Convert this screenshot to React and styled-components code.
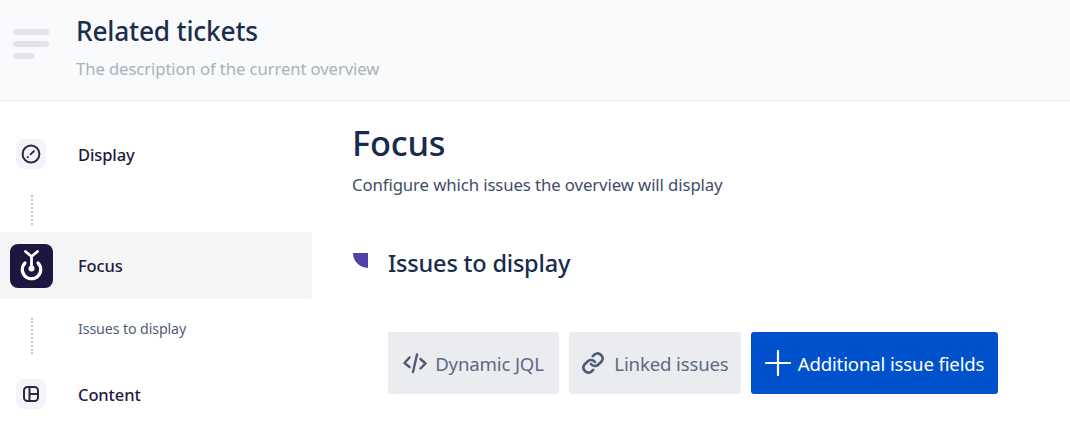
import React from "react";
import styled, { createGlobalStyle } from "styled-components";

const Global = createGlobalStyle`
  html, body { margin: 0; padding: 0; background: #fff; overflow: hidden; }
  body { font-family: "Noto Sans", "Open Sans", sans-serif; }
`;
const Page = styled.div`width: 1070px; height: 428px; overflow: hidden; display: flex; flex-direction: column;`;
const Header = styled.header`
  height: 100px; flex: none; box-sizing: content-box; background: #f9fafc; border-bottom: 1px solid #e6e8ec;
  display: flex; align-items: flex-start;
`;
const Burger = styled.div`
  width: 36px; margin: 29px 27px 0 13px; display: flex; flex-direction: column; gap: 6px;
`;
const BurgerBar = styled.span`
  display: block; height: 6px; border-radius: 3px; background: #e1e3e9; width: ${p => p.$w}px;
`;
const HeadText = styled.div`padding-top: 12px;`;
const HeadTitle = styled.h1`margin: 0; font-size: 26.3px; line-height: 38px; font-weight: 500; color: #1d2e4d; letter-spacing: -0.2px;`;
const HeadSub = styled.p`margin: 1px 0 0; font-size: 16.7px; line-height: 36px; color: #aab1c0; letter-spacing: -0.1px;`;
const Body = styled.div`display: flex; flex: 1; min-height: 0;`;
const Side = styled.nav`width: 312px; flex: none; display: flex; flex-direction: column; padding-top: 38px;`;
const StepRow = styled.div`
  height: ${p => p.$h}px; display: flex; align-items: center; color: #1e1a40;
  font-size: 16.5px; font-weight: 500; letter-spacing: -0.1px;
  margin-top: ${p => p.$t || 0}px;
  ${p => p.$active ? "background: #f4f5f7; border-radius: 0 3px 3px 0;" : ""}
`;
const IconSlot = styled.div`width: 78px; flex: none; display: flex; justify-content: center; padding-right: 16px; box-sizing: border-box;`;
const IconBox = styled.div`
  width: 30px; height: 30px; border-radius: 8px; background: #f4f5f7; display: flex; align-items: center; justify-content: center;
`;
const ActiveIcon = styled.div`
  width: 43px; height: 44px; border-radius: 8px; background: #1f1640; display: flex;
`;
const Connector = styled.div`
  height: ${p => p.$h}px; margin-top: ${p => p.$t}px; display: flex; align-items: center;
`;
const Dots = styled.span`
  display: block; width: 0; height: 100%; margin-left: 31px; border-left: 2px dotted #c3c8d2; 
`;
const SubLabel = styled.span`
  margin: 0 0 16px 45px; font-size: 14.2px; color: #4f5d78; letter-spacing: -0.1px;
`;
const Main = styled.main`flex: 1; padding: 20px 0 0 40px;`;
const Title = styled.h2`margin: 0; font-size: 34.4px; line-height: 44px; font-weight: 500; color: #172b4d; letter-spacing: -0.2px;`;
const Sub = styled.p`margin: 7px 0 0; font-size: 16.75px; line-height: 26px; color: #3f4d68; letter-spacing: -0.1px;`;
const Section = styled.div`display: flex; align-items: center; margin: 45px 0 0 1px; height: 40px; gap: 20px;`;
const Quarter = styled.span`
  width: 15px; height: 15px; background: #5243aa; border-bottom-left-radius: 15px; margin-top: -6px; flex: none;
`;
const SectionTitle = styled.h3`margin: 0; font-size: 23.5px; font-weight: 500; color: #172b4d; letter-spacing: -0.2px;`;
const Buttons = styled.div`display: flex; gap: 10px; margin: 49px 0 0 36px;`;
const Btn = styled.button`
  height: 62px; width: ${p => p.$w}px; border: 0; border-radius: 3px; padding: 0; font: inherit; font-size: 18.6px;
  letter-spacing: -0.15px;
  display: flex; align-items: center; justify-content: center; gap: ${p => p.$gap}px;
  background: ${p => p.$primary ? "#0052cc" : "#ebecf0"};
  color: ${p => p.$primary ? "#fff" : "#5e6a80"};
`;

export default function App() {
  return (
    <Page>
      <Global />
      <Header>
        <Burger>
          <BurgerBar $w={36} />
          <BurgerBar $w={36} />
          <BurgerBar $w={21} />
        </Burger>
        <HeadText>
          <HeadTitle>Related tickets</HeadTitle>
          <HeadSub>The description of the current overview</HeadSub>
        </HeadText>
      </Header>
      <Body>
        <Side>
          <StepRow $h={30}>
            <IconSlot>
              <IconBox>
                <svg width="20" height="20" viewBox="0 0 20 20" fill="none" stroke="#2c2748" strokeWidth="2" strokeLinecap="round">
                  <circle cx="10" cy="10" r="8.4" />
                  <path d="M6.8 13.2l.1-.1M9.6 10.4 12.9 7.1" />
                </svg>
              </IconBox>
            </IconSlot>
            Display
          </StepRow>
          <Connector $h={30} $t={26}><Dots /></Connector>
          <StepRow $h={67} $t={7} $active>
            <IconSlot>
              <ActiveIcon>
                <svg width="43" height="44" viewBox="0 0 43 44" fill="none" stroke="#fff" strokeWidth="3.2" strokeLinecap="round" strokeLinejoin="round">
                  <path d="M15 19a9.2 9.2 0 1 0 13 0" />
                  <path d="M15.5 7.5 21.5 12.5 27.5 7.5M21.5 12.5V24" strokeWidth="2.8" />
                  <circle cx="21.5" cy="24.5" r="3" fill="#fff" stroke="none" />
                </svg>
              </ActiveIcon>
            </IconSlot>
            Focus
          </StepRow>
          <Connector $h={36} $t={19}><Dots /><SubLabel>Issues to display</SubLabel></Connector>
          <StepRow $h={30} $t={25}>
            <IconSlot>
              <IconBox>
                <svg width="18" height="18" viewBox="0 0 18 18" fill="none" stroke="#2c2748" strokeWidth="2" strokeLinejoin="round">
                  <rect x="2" y="2" width="14" height="14" rx="3.5" />
                  <path d="M7.5 2v14M7.5 9H16" />
                </svg>
              </IconBox>
            </IconSlot>
            Content
          </StepRow>
        </Side>
        <Main>
          <Title>Focus</Title>
          <Sub>Configure which issues the overview will display</Sub>
          <Section>
            <Quarter />
            <SectionTitle>Issues to display</SectionTitle>
          </Section>
          <Buttons>
            <Btn $w={171} $gap={8}>
              <svg width="24" height="24" viewBox="0 0 24 24" fill="none" stroke="#4f5b73" strokeWidth="2.4" strokeLinecap="round" strokeLinejoin="round">
                <path d="M6.5 6.5 1.5 12l5 4M17.5 8l5 4.5-5 5M14 3.5 10 21" />
              </svg>
              Dynamic JQL
            </Btn>
            <Btn $w={172} $gap={9}>
              <svg width="24" height="24" viewBox="0 0 24 24" fill="none" stroke="#4f5b73" strokeWidth="2.6" strokeLinecap="round" strokeLinejoin="round">
                <path d="M10 13a5 5 0 0 0 7.5.5l3-3a5 5 0 0 0-7-7l-1.7 1.7" />
                <path d="M14 11a5 5 0 0 0-7.5-.5l-3 3a5 5 0 0 0 7 7l1.7-1.7" />
              </svg>
              Linked issues
            </Btn>
            <Btn $w={247} $gap={7} $primary>
              <svg width="26" height="26" viewBox="0 0 26 26" fill="none" stroke="#fff" strokeWidth="2.2" strokeLinecap="round">
                <path d="M13 1v24M1 13h24" />
              </svg>
              Additional issue fields
            </Btn>
          </Buttons>
        </Main>
      </Body>
    </Page>
  );
}
